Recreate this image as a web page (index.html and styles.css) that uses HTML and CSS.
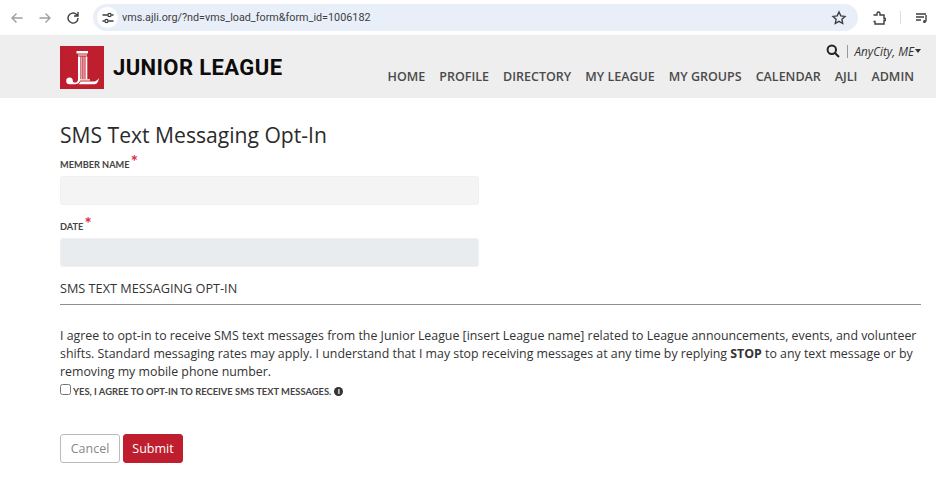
FILE: index.html
```html
<!DOCTYPE html>
<html lang="en">
<head>
  <meta charset="UTF-8" />
  <title>SMS Text Messaging Opt-In</title>
  <link rel="stylesheet" href="styles.css">
</head>
<body>
  <div class="browser-bar">
    <div class="browser-nav">
      <svg class="ico" viewBox="0 0 16 16"><path d="M13.5 8H3M7.5 3.5 3 8l4.5 4.5" class="ico-faded"/></svg>
      <svg class="ico" viewBox="0 0 16 16"><path d="M2.5 8H13M8.5 3.5 13 8l-4.5 4.5" class="ico-faded"/></svg>
      <svg class="ico" viewBox="0 0 16 16"><path d="M13 8a5 5 0 1 1-1.5-3.5L13 6M13 2v4H9" class="ico-dark"/></svg>
    </div>
    <div class="address">
      <span class="site-btn">
        <svg class="ico-small" viewBox="0 0 14 14"><path d="M1.5 4h5M10.5 4h2M1.5 10h2M7.5 10h5" class="ico-dark"/><circle cx="8.5" cy="4" r="1.6" class="ico-dark"/><circle cx="5.5" cy="10" r="1.6" class="ico-dark"/></svg>
      </span>
      <span class="url">vms.ajli.org/?nd=vms_load_form&amp;form_id=1006182</span>
      <svg class="ico star" viewBox="0 0 16 16"><path d="M8 2l1.8 3.900 4.200.5-3.100 2.900.8 4.200L8 11.400l-3.700 2.100.8-4.200L2 6.400l4.200-.5z" class="ico-dark"/></svg>
    </div>
    <div class="browser-tools">
      <svg class="ico" viewBox="0 0 16 16"><path d="M2.500 5H6V3.500a1.500 1.500 0 0 1 3 0V5h4v3.500h1.200v2H13v3.500H4v-2.500H2.500" class="ico-dark"/></svg>
      <span class="tool-sep"></span>
      <svg class="ico" viewBox="0 0 16 16"><path d="M2 4h10M2 7h8M2 10h5M12 5v6.500" class="ico-dark"/><circle cx="10.500" cy="11.500" r="1.500" class="ico-fill"/></svg>
    </div>
  </div>

  <header class="site-header">
    <a class="brand" href="#">
      <svg class="logo" viewBox="0 0 44 43">
        <rect width="44" height="43" fill="#be1e2d"/>
        <!-- column capital, flutes and base -->
        <path d="M16.500 5H28v2.600H16.500zM18 8.400h9v1.200h-9zM21.400 10.500h.9V33h-.9zM23.500 10.500h.9V33h-.9zM18 33.200h12v1.300H18z" fill="#fff"/>
        <!-- J -->
        <path d="M18 10.500h2.400V33c0 3.300-2.300 5.200-5.300 5.200H9.500a3.300 3.300 0 1 1 3.300-3.500c.1 1.300.9 1.900 2 1.900 1.900 0 3.200-1 3.200-3.600z" fill="#fff"/>
        <!-- L -->
        <path d="M25.500 10.500h1.800V33h-1.800zM20.500 35.500H34c2 0 3.500-1.300 4.800-3.500-.2 3-1.500 6.200-4.200 6.200H18.500c1-.7 1.700-1.500 2-2.700z" fill="#fff"/>
      </svg>
      <span class="brand-name">JUNIOR LEAGUE</span>
    </a>
    <div class="header-right">
      <div class="header-tools">
        <svg class="search" viewBox="0 0 14 14"><circle cx="5.800" cy="5.800" r="4.200"/><path d="M9 9l4 4"/></svg>
        <span class="tools-sep"></span>
        <span class="league">AnyCity, ME</span>
        <span class="caret"></span>
      </div>
      <nav class="main-nav">
        <a href="#">HOME</a>
        <a href="#">PROFILE</a>
        <a href="#">DIRECTORY</a>
        <a href="#">MY LEAGUE</a>
        <a href="#">MY GROUPS</a>
        <a href="#">CALENDAR</a>
        <a href="#">AJLI</a>
        <a href="#">ADMIN</a>
      </nav>
    </div>
  </header>

  <main class="content">
    <h1>SMS Text Messaging Opt-In</h1>
    <form>
      <div class="field">
        <label for="member">MEMBER NAME <span class="req">*</span></label>
        <input type="text" id="member" class="input-light" />
      </div>
      <div class="field">
        <label for="date">DATE <span class="req">*</span></label>
        <input type="text" id="date" class="input-grey" />
      </div>
      <h2>SMS TEXT MESSAGING OPT-IN</h2>
      <p class="agree-text">I agree to opt-in to receive SMS text messages from the Junior League [insert League name] related to League announcements, events, and volunteer shifts. Standard messaging rates may apply. I understand that I may stop receiving messages at any time by replying <b>STOP</b> to any text message or by removing my mobile phone number.</p>
      <div class="check-row">
        <input type="checkbox" id="agree" />
        <label for="agree">YES, I AGREE TO OPT-IN TO RECEIVE SMS TEXT MESSAGES.</label>
        <span class="info">i</span>
      </div>
      <div class="btn-container">
        <button type="button" class="btn-cancel">Cancel</button>
        <button type="button" class="btn-submit">Submit</button>
      </div>
    </form>
  </main>
</body>
</html>
```

FILE: styles.css
```css
* {
  box-sizing: border-box;
}
body {
  margin: 0;
  background: #fff;
  font-family: "Open Sans", Arial, sans-serif;
  color: #333;
}
a {
  text-decoration: none;
  color: inherit;
}

/* browser chrome */
.browser-bar {
  display: flex;
  align-items: center;
  height: 35px;
  padding: 0 0 0 9px;
}
.browser-nav {
  display: flex;
  gap: 12px;
  width: 84px;
  flex: none;
}
.ico {
  width: 16px;
  height: 16px;
  flex: none;
}
.ico-small {
  width: 14px;
  height: 14px;
}
.ico path,
.ico circle,
.ico-small path,
.ico-small circle {
  fill: none;
  stroke-width: 1.4;
}
.ico .ico-faded {
  stroke: #9a9da1;
}
.ico .ico-dark,
.ico-small .ico-dark {
  stroke: #3c4043;
}
.ico .ico-fill {
  fill: #3c4043;
  stroke: none;
}
.address {
  display: flex;
  align-items: center;
  flex: none;
  width: 765px;
  height: 27px;
  border-radius: 14px;
  background: #e9eff8;
  padding: 0 11px 0 4px;
}
.site-btn {
  display: flex;
  align-items: center;
  justify-content: center;
  width: 21px;
  height: 21px;
  border-radius: 50%;
  background: #fff;
  margin-right: 4px;
}
.url {
  flex: 1;
  font-family: Roboto, Arial, sans-serif;
  font-size: 10.800px;
  color: #3c4043;
}
.browser-tools {
  display: flex;
  align-items: center;
  flex: none;
  margin-left: 13px;
  gap: 13px;
}
.tool-sep {
  width: 1px;
  height: 13px;
  background: #d3e0f2;
}

/* site header */
.site-header {
  display: flex;
  justify-content: space-between;
  height: 63px;
  background: #eee;
  padding: 11px 15px 0 60px;
}
.brand {
  display: flex;
  align-items: center;
  gap: 9px;
  height: 43px;
}
.logo {
  width: 44px;
  height: 43px;
}
.brand-name {
  font-family: Roboto, Arial, sans-serif;
  font-weight: 700;
  font-size: 22px;
  letter-spacing: 0.4px;
  color: #0c0c0c;
}
.header-right {
  display: flex;
  flex-direction: column;
  align-items: flex-end;
}
.header-tools {
  display: flex;
  align-items: center;
  height: 14px;
  margin-top: -2px;
}
.search {
  width: 14px;
  height: 14px;
}
.search circle,
.search path {
  fill: none;
  stroke: #222;
  stroke-width: 2;
}
.tools-sep {
  width: 1px;
  height: 13px;
  background: #999;
  margin: 0 7px;
}
.league {
  font-size: 11.700px;
  font-style: italic;
  color: #333;
}
.caret {
  border-top: 4px solid #333;
  border-left: 3.500px solid transparent;
  border-right: 3.500px solid transparent;
  margin-left: 1px;
}
.main-nav {
  display: flex;
  gap: 14px;
  margin-top: 10px;
  padding-right: 7px;
}
.main-nav a {
  font-size: 12.500px;
  font-weight: 600;
  color: #4a4a4a;
}

/* form */
.content {
  padding: 23px 15px 0 60px;
}
h1 {
  margin: 0;
  font-size: 21.100px;
  font-weight: 400;
  line-height: 28px;
  color: #2b2b2b;
}
.field {
  margin-top: 7px;
}
.field + .field {
  margin-top: 13px;
}
.field label {
  display: block;
  font-family: Lato, Arial, sans-serif;
  font-size: 9.200px;
  font-weight: 700;
  line-height: 18px;
  color: #444;
}
.req {
  color: #dc2a45;
  font-size: 17px;
  font-weight: 700;
  line-height: 10px;
  margin-left: -1px;
}
.field input {
  display: block;
  width: 419px;
  height: 29px;
  margin-top: 2px;
  border: 1px solid #f0f0f0;
  border-radius: 3px;
}
.input-light {
  background: #f4f4f4;
}
.input-grey {
  background: #e9ecef;
}
h2 {
  margin: 13px 0 0;
  padding-bottom: 7px;
  border-bottom: 1px solid #8e8e8e;
  font-size: 12.700px;
  font-weight: 400;
  line-height: 17px;
  color: #333;
}
.agree-text {
  margin: 22px 0 0;
  font-size: 12.370px;
  line-height: 18px;
  color: #333;
}
.check-row {
  display: flex;
  align-items: center;
  height: 14px;
  margin-top: 3px;
}
.check-row input {
  width: 11px;
  height: 11px;
  margin: 0 2px 3px 0;
  accent-color: #777;
}
.check-row label {
  font-family: Lato, Arial, sans-serif;
  font-size: 9.400px;
  font-weight: 700;
  color: #444;
}
.info {
  display: flex;
  align-items: center;
  justify-content: center;
  width: 9px;
  height: 9px;
  margin-left: 3px;
  border-radius: 50%;
  background: #333;
  color: #fff;
  font-size: 7px;
  font-weight: 700;
}
.btn-container {
  display: flex;
  gap: 3px;
  margin-top: 36px;
}
button {
  width: 60px;
  height: 29px;
  padding: 0;
  border-radius: 3px;
  font-family: "Open Sans", Arial, sans-serif;
  font-size: 12.500px;
  cursor: pointer;
}
.btn-cancel {
  background: #fff;
  border: 1px solid #bbb;
  color: #888;
}
.btn-submit {
  background: #be1e2d;
  border: 1px solid #be1e2d;
  color: #fff;
  font-weight: 500;
}
```
